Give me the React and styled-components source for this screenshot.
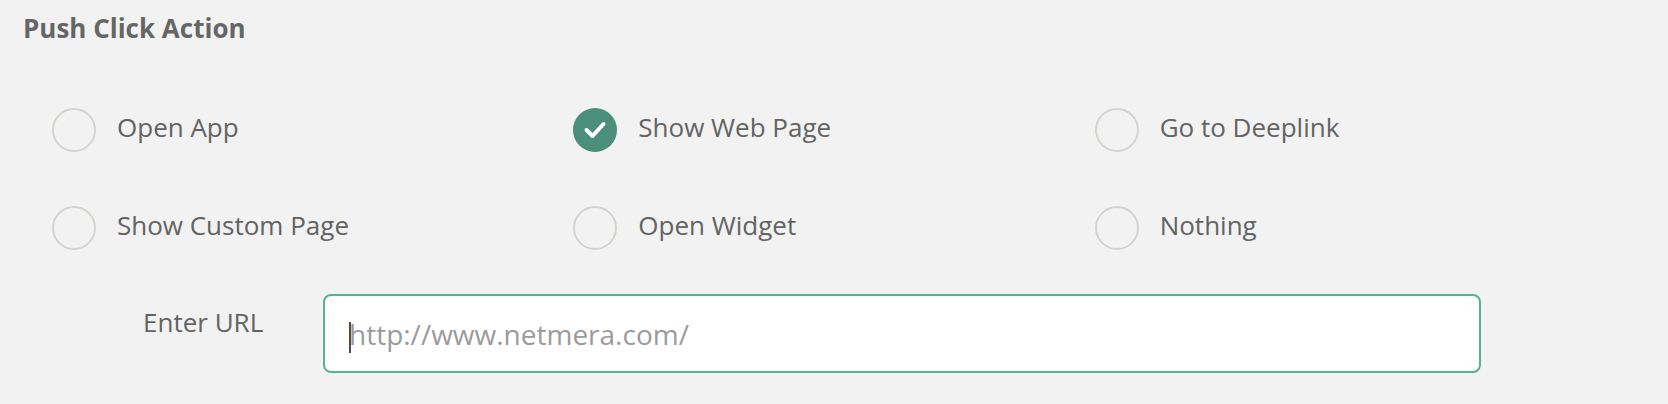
import styled, { createGlobalStyle } from "styled-components";

const GlobalStyle = createGlobalStyle`
    html, body {
        margin: 0;
        padding: 0;
        background: #f2f2f2;
    }
    body {
        font-family: "Open Sans", "Noto Sans", sans-serif;
        color: #636363;
    }
`;

const Pagina = styled.div`
    width: 1668px;
    height: 404px;
    background: #f2f2f2;
    padding-top: 13px;
    box-sizing: border-box;
`;

const Titulo = styled.h2`
    margin: 0;
    padding-left: 23px;
    font-size: 26px;
    line-height: 30px;
    font-weight: 700;
    color: #666666;
`;

const GradeOpcoes = styled.div`
    display: grid;
    grid-template-columns: repeat(3, 1fr);
    row-gap: 54px;
    padding: 0 52px;
    margin-top: 65px;
`;

const Opcao = styled.label`
    display: flex;
    align-items: center;
    gap: 21px;
    height: 44px;
    cursor: pointer;
`;

const Circulo = styled.span`
    box-sizing: border-box;
    width: 44px;
    height: 44px;
    border-radius: 50%;
    flex-shrink: 0;
    border: ${(p) => (p.$ativo ? "none" : "2px solid #d6d3ce")};
    background: ${(p) => (p.$ativo ? "#4b8e7a" : "transparent")};
    display: flex;
    align-items: center;
    justify-content: center;
`;

const TextoOpcao = styled.span`
    font-size: 26px;
    line-height: 44px;
    margin-bottom: 7px;
    color: #636363;
`;

const LinhaUrl = styled.div`
    display: flex;
    align-items: flex-start;
    margin-top: 44px;
    padding-left: 143px;
`;

const RotuloUrl = styled.span`
    width: 180px;
    margin-top: 11px;
    font-size: 26px;
    line-height: 34px;
    color: #636363;
`;

const CaixaUrl = styled.div`
    position: relative;
    width: 1158px;
    height: 79px;
`;

const EntradaUrl = styled.input`
    box-sizing: border-box;
    width: 100%;
    height: 100%;
    border: 2px solid #56b294;
    border-radius: 8px;
    background: #ffffff;
    padding: 0 0 0 24px;
    font-family: "Open Sans", "Noto Sans", sans-serif;
    font-size: 28px;
    color: #555555;
    outline: none;
    &::placeholder {
        color: #9b9b9b;
    }
`;

const Cursor = styled.span`
    position: absolute;
    left: 26px;
    top: 28px;
    width: 2px;
    height: 31px;
    background: #4a4a4a;
`;

const opcoes = [
    "Open App",
    "Show Web Page",
    "Go to Deeplink",
    "Show Custom Page",
    "Open Widget",
    "Nothing",
];

function Check() {
    return (
        <svg width="44" height="44" viewBox="0 0 44 44">
            <polyline
                points="13.5,22 19.5,28 30.5,16"
                fill="none"
                stroke="#ffffff"
                strokeWidth="4"
                strokeLinecap="round"
                strokeLinejoin="round"
            />
        </svg>
    );
}

function App() {
    const selecionada = "Show Web Page";

    return (
        <>
            <GlobalStyle />
            <Pagina>
                <Titulo>Push Click Action</Titulo>
                <GradeOpcoes>
                    {opcoes.map((opcao) => (
                        <Opcao key={opcao}>
                            <Circulo $ativo={opcao === selecionada}>
                                {opcao === selecionada && <Check />}
                            </Circulo>
                            <TextoOpcao>{opcao}</TextoOpcao>
                        </Opcao>
                    ))}
                </GradeOpcoes>
                <LinhaUrl>
                    <RotuloUrl>Enter URL</RotuloUrl>
                    <CaixaUrl>
                        <EntradaUrl type="text" placeholder="http://www.netmera.com/" />
                        <Cursor />
                    </CaixaUrl>
                </LinhaUrl>
            </Pagina>
        </>
    );
}

export default App;
